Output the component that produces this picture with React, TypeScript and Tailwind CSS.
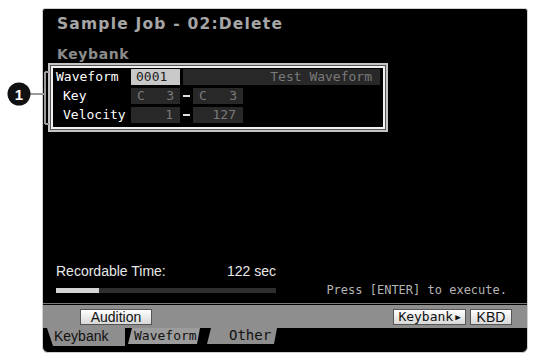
import React from "react";

const pix = { fontFamily: '"DejaVu Sans Mono", "Liberation Mono", monospace' };
const sans = { fontFamily: '"Liberation Sans", Arial, sans-serif' };
const bold = { fontFamily: '"DejaVu Sans", "Liberation Sans", sans-serif' };

function Field({ w, children, className = "" }: { w: string; children: React.ReactNode; className?: string }) {
  return (
    <div className={`${w} h-[16px] bg-[#282828] text-[#7a7a7a] text-[13px] leading-[16px] flex items-center ${className}`} style={pix}>
      {children}
    </div>
  );
}

function Dash() {
  return (
    <div className="w-[13px] h-[16px] flex items-center justify-center">
      <div className="w-[7px] h-[2px] bg-[#e0e0e0]" />
    </div>
  );
}

export default function App() {
  return (
    <div className="relative w-[534px] h-[357px] bg-white overflow-hidden">
      {/* callout annotation */}
      <svg className="absolute left-0 top-0" width="60" height="140" viewBox="0 0 60 140">
        <path d="M30 94 H45 M45 72 V124 M45 72 H49 M45 124 H49" stroke="#9a9a9a" strokeWidth="2" fill="none" />
        <circle cx="19" cy="94" r="11.5" fill="#111" />
        <text x="19" y="99.5" textAnchor="middle" fontSize="15" fontWeight="bold" fill="#fff" fontFamily="Liberation Sans, Arial, sans-serif">1</text>
      </svg>

      <div className="ml-[42px] mt-[8px] w-[486px] h-[345px] bg-black rounded-t-[3px] rounded-b-[6px] border border-[#d0d0d0] flex flex-col overflow-hidden">
        {/* Title */}
        <div className="pl-[14px] pt-[5px] h-[26px] text-[15.5px] leading-[20px] font-bold text-[#a6a6a6] tracking-[1.2px]" style={bold}>
          Sample Job - 02:Delete
        </div>
        <div className="pl-[14px] pt-[10px] h-[28px] text-[14px] leading-[18px] font-bold text-[#8c8c8c] tracking-[0.6px]" style={bold}>
          Keybank
        </div>

        {/* Box */}
        <div className="ml-[5px] w-[340px] h-[69px] border-2 border-[#c4c4c4] bg-[#555] p-[1px]">
          <div className="w-full h-full border-2 border-[#f0f0f0] bg-black flex flex-col gap-[3px] pt-[1px]">
            <div className="flex items-center h-[16px]">
              <div className="w-[78px] pl-[3px] text-white text-[13px]" style={pix}>Waveform</div>
              <div className="w-[49px] h-[16px] bg-[#c8c8c8] text-[#222] text-[13px] leading-[16px] pl-[5px]" style={pix}>0001</div>
              <Field w="w-[197px]" className="ml-[3px] justify-end pr-[8px]">Test Waveform</Field>
            </div>
            <div className="flex items-center h-[16px]">
              <div className="w-[78px] pl-[10px] text-white text-[13px]" style={pix}>Key</div>
              <Field w="w-[49px]" className="justify-between px-[6px]"><span>C</span><span>3</span></Field>
              <Dash />
              <Field w="w-[50px]" className="justify-between px-[6px]"><span>C</span><span>3</span></Field>
            </div>
            <div className="flex items-center h-[16px]">
              <div className="w-[78px] pl-[10px] text-white text-[13px]" style={pix}>Velocity</div>
              <Field w="w-[49px]" className="justify-end pr-[7px]">1</Field>
              <Dash />
              <Field w="w-[50px]" className="justify-end pr-[7px]">127</Field>
            </div>
          </div>
        </div>

        <div className="flex-1" />

        {/* Recordable time */}
        <div className="flex items-end pl-[13px] pr-[20px]">
          <div className="w-[220px] flex flex-col">
            <div className="flex justify-between text-[14px] leading-[16px] text-[#e8e8e8]" style={sans}>
              <span>Recordable Time:</span>
              <span>122 sec</span>
            </div>
            <div className="mt-[9px] h-[5px] bg-[#2e2e2e] flex">
              <div className="w-[43px] h-full bg-[#d4d4d4]" />
            </div>
          </div>
          <div className="flex-1 text-right text-[12px] leading-[14px] text-[#b4b4b4] -mb-[4px]" style={pix}>
            Press [ENTER] to execute.
          </div>
        </div>

        <div className="mt-[10px] h-[1px] bg-[#7a7a7a]" />
        <div className="mt-[1px] h-[23px] bg-[#8e8e8e] flex items-center pl-[37px] pr-[15px]">
          <div className="h-[16px] w-[72px] bg-gradient-to-b from-white to-[#d8d8d8] border border-[#555] text-[14px] leading-[14px] text-[#111] flex items-center justify-center" style={sans}>Audition</div>
          <div className="flex-1" />
          <div className="h-[16px] w-[73px] bg-gradient-to-b from-white to-[#d8d8d8] border border-[#555] text-[13px] leading-[14px] text-[#111] flex items-center justify-center gap-[2px]" style={pix}>
            Keybank<span className="text-[9px]">▶</span>
          </div>
          <div className="h-[16px] w-[42px] ml-[4px] bg-gradient-to-b from-white to-[#d8d8d8] border border-[#555] text-[14px] leading-[14px] text-[#111] flex items-center justify-center" style={sans}>KBD</div>
        </div>

        {/* Tabs */}
        <div className="h-[18px] flex items-start pl-[4px] gap-[3px]">
          <div className="h-[18px] w-[78px] bg-[#8e8e8e] text-[14px] leading-[16px] text-[#111] pl-[7px] [clip-path:polygon(0_0,100%_0,100%_100%,6px_100%)]" style={sans}>Keybank</div>
          <div className="h-[16px] w-[72px] bg-[#9c9c9c] text-[13px] leading-[15px] text-[#111] pl-[6px] [clip-path:polygon(4px_0,100%_0,calc(100%-3px)_100%,0_100%)]" style={pix}>Waveform</div>
          <div className="h-[16px] w-[70px] ml-[4px] bg-[#8e8e8e] text-[14px] leading-[15px] text-[#111] pl-[22px] [clip-path:polygon(4px_0,100%_0,calc(100%-3px)_100%,0_100%)]" style={pix}>Other</div>
        </div>
        <div className="h-[6px]" />
      </div>
    </div>
  );
}
